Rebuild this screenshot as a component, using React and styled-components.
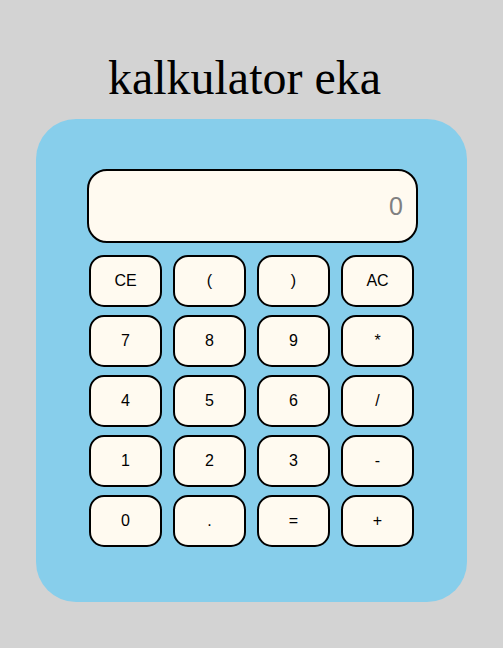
import styled, { createGlobalStyle } from 'styled-components';

const GlobalStyle = createGlobalStyle`
  html, body {
    margin: 0;
    padding: 0;
    background: #d3d3d3;
  }
  body {
    font-family: "Liberation Serif", "Times New Roman", serif;
  }
`;

const Page = styled.div`
  width: 503px;
  display: flex;
  flex-direction: column;
  align-items: center;
`;

const Title = styled.h1`
  margin: 50px 0 14px -14px;
  font-family: "Liberation Serif", "Times New Roman", serif;
  font-size: 48px;
  font-weight: normal;
  line-height: 55px;
  color: #000;
`;

const Calculator = styled.div`
  width: 431px;
  box-sizing: border-box;
  background: #87ceeb;
  border-radius: 40px;
  padding: 50px 0 55px 51px;
`;

const Display = styled.div`
  width: 331px;
  height: 74px;
  box-sizing: border-box;
  border: 2px solid #000;
  border-radius: 20px;
  background: #fffaf0;
  display: flex;
  align-items: center;
  justify-content: flex-end;
  padding-right: 13px;
  font-family: "Liberation Sans", Arial, sans-serif;
  font-size: 25px;
  color: #808080;
`;

const Keys = styled.div`
  display: grid;
  grid-template-columns: repeat(4, 73px);
  grid-auto-rows: 52px;
  column-gap: 11px;
  row-gap: 8px;
  margin: 12px 0 0 2px;
`;

const Key = styled.button`
  box-sizing: border-box;
  border: 2px solid #000;
  border-radius: 15px;
  background: #fffaf0;
  font-family: "Liberation Sans", Arial, sans-serif;
  font-size: 16px;
  color: #000;
  padding: 0;
  cursor: pointer;
`;

const keys = ['CE', '(', ')', 'AC', '7', '8', '9', '*', '4', '5', '6', '/', '1', '2', '3', '-', '0', '.', '=', '+'];

export default function App() {
  return (
    <Page>
      <GlobalStyle />
      <Title>kalkulator eka</Title>
      <Calculator>
        <Display>0</Display>
        <Keys>
          {keys.map((k) => (
            <Key key={k}>{k}</Key>
          ))}
        </Keys>
      </Calculator>
    </Page>
  );
}
